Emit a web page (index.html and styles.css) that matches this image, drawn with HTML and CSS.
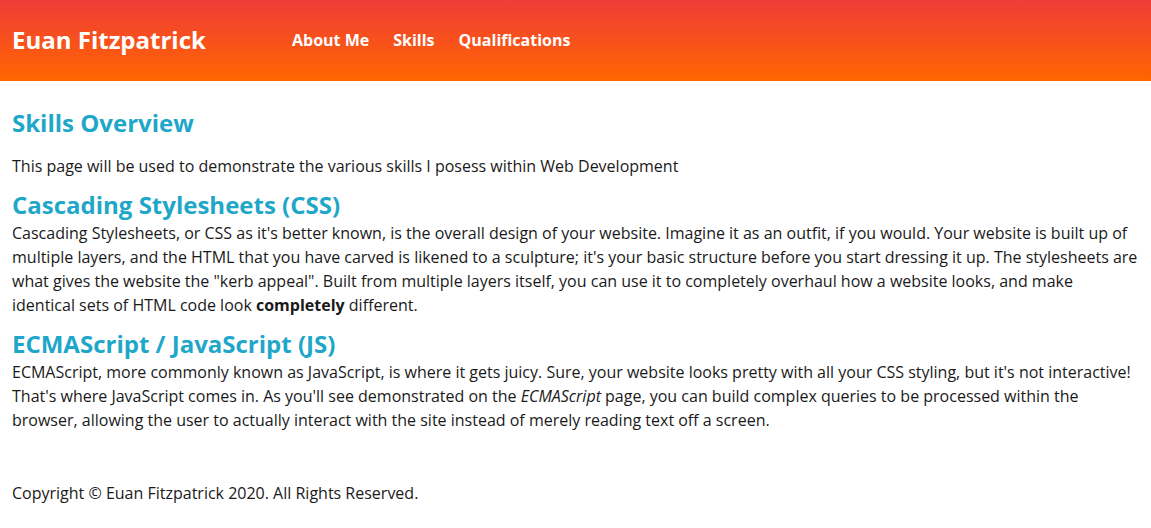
FILE: index.html
```html
<!DOCTYPE html>
<html lang="en">
<head>
    <meta charset="UTF-8">
    <meta name="viewport" content="width=device-width, initial-scale=1.0">
    <title>Euan Fitzpatrick - Skills</title>
    <link rel="stylesheet" href="styles.css">
</head>
<body>
    <header class="site-header">
        <div class="site-title">Euan Fitzpatrick</div>
        <nav class="site-nav">
            <a href="#">About Me</a>
            <a href="#">Skills</a>
            <a href="#">Qualifications</a>
        </nav>
    </header>

    <main class="content">
        <h2 class="page-title">Skills Overview</h2>
        <p class="intro">This page will be used to demonstrate the various skills I posess within Web Development</p>

        <h2>Cascading Stylesheets (CSS)</h2>
        <p>Cascading Stylesheets, or CSS as it's better known, is the overall design of your website. Imagine it as an outfit, if you would. Your website is built up of multiple layers, and the HTML that you have carved is likened to a sculpture; it's your basic structure before you start dressing it up. The stylesheets are what gives the website the "kerb appeal". Built from multiple layers itself, you can use it to completely overhaul how a website looks, and make identical sets of HTML code look <strong>completely</strong> different.</p>

        <h2>ECMAScript / JavaScript (JS)</h2>
        <p>ECMAScript, more commonly known as JavaScript, is where it gets juicy. Sure, your website looks pretty with all your CSS styling, but it's not interactive! That's where JavaScript comes in. As you'll see demonstrated on the <em>ECMAScript</em> page, you can build complex queries to be processed within the browser, allowing the user to actually interact with the site instead of merely reading text off a screen.</p>
    </main>

    <footer class="site-footer">
        Copyright &copy; Euan Fitzpatrick 2020. All Rights Reserved.
    </footer>
</body>
</html>
```

FILE: styles.css
```css
body {
    margin: 0;
    font-family: "Open Sans", Arial, sans-serif;
    font-size: 16px;
    line-height: 24px;
    color: #1a1a1a;
    background-color: white;
}

.site-header {
    display: flex;
    align-items: center;
    height: 81px;
    padding: 0 12px;
    background: linear-gradient(to bottom, #f03c38, #ff6600);
}

.site-title {
    width: 280px;
    margin-top: -1px;
    color: white;
    font-size: 24px;
    font-weight: bold;
}

.site-nav {
    display: flex;
    gap: 24px;
    margin-top: -1px;
}

.site-nav a {
    color: white;
    font-weight: bold;
    text-decoration: none;
}

.content {
    padding: 27px 12px 0;
}

h2 {
    margin: 12px 0 1px;
    color: #1ea7c8;
    font-size: 24px;
    line-height: 30px;
}

.page-title {
    margin-top: 0;
}

p {
    margin: 0;
}

.intro {
    margin-top: 16px;
}

.site-footer {
    padding: 49px 12px 0;
}
```
